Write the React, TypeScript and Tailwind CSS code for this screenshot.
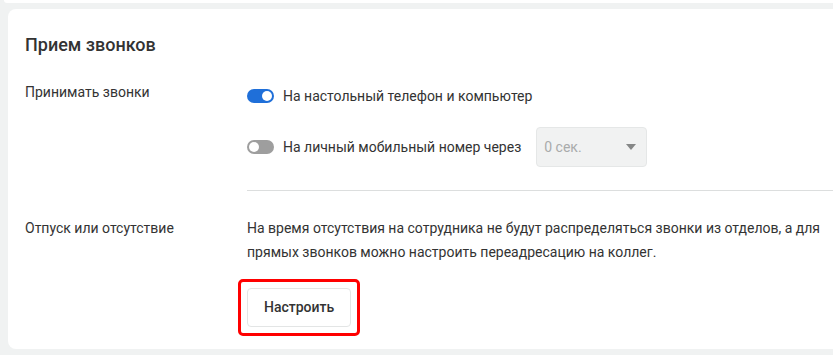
export default function App() {
  return (
    <div className="w-[833px] h-[355px] overflow-hidden bg-[#f0f2f2] font-['Roboto',sans-serif] text-[#333]">
      {/* bottom edge of the card above */}
      <div className="h-[3px] ml-[4px] bg-white rounded-bl-[6px]" />

      <div className="mt-[6px] ml-[8px] w-[900px] bg-white rounded-l-[8px] pl-[17px] pt-[24px] pb-[13px]">
        <h2 className="text-[18px] leading-[24px] font-medium">Прием звонков</h2>

        {/* Принимать звонки */}
        <div className="mt-[19px] flex">
          <div className="w-[222px] shrink-0 pt-[6px] text-[14px] leading-[20px]">Принимать звонки</div>
          <div className="flex-1 flex flex-col gap-[11px]">
            <div className="h-[40px] flex items-center gap-[9px]">
              <Toggle on />
              <span className="text-[14px] leading-[20px]">На настольный телефон и компьютер</span>
            </div>
            <div className="h-[40px] flex items-center">
              <Toggle on={false} />
              <span className="ml-[9px] text-[14px] leading-[20px]">На личный мобильный номер через</span>
              <div className="ml-[15px] w-[111px] h-[40px] flex items-center justify-between pl-[7px] pr-[10px] bg-[#f1f2f2] border border-[#e5e7e7] rounded-[4px]">
                <span className="text-[14px] text-[#a9abab]">0 сек.</span>
                <svg width="10" height="6" viewBox="0 0 10 6">
                  <path d="M0 0h10L5 6z" fill="#858787" />
                </svg>
              </div>
            </div>
          </div>
        </div>

        <div className="ml-[222px] mt-[23px] h-px bg-[#dcdede]" />

        {/* Отпуск или отсутствие */}
        <div className="mt-[25px] flex">
          <div className="w-[222px] shrink-0 text-[14px] leading-[24px]">Отпуск или отсутствие</div>
          <div className="flex-1">
            <p className="w-[585px] text-[14px] leading-[24px]">
              На время отсутствия на сотрудника не будут распределяться звонки из отделов, а для прямых звонков можно настроить переадресацию на коллег.
            </p>
            <div className="mt-[15px] -ml-[9px] w-fit border-[3px] border-[#ff0000] rounded-[5px] p-[6px]">
              <button className="h-[39px] px-[16px] bg-white border border-[#e3e5e5] rounded-[4px] text-[14px] font-medium text-[#333]">
                Настроить
              </button>
            </div>
          </div>
        </div>
      </div>
    </div>
  );
}

function Toggle({ on }: { on: boolean }) {
  return (
    <div
      className={
        on
          ? "w-[27px] h-[14px] rounded-full bg-[#1f6fd9] flex items-center justify-end px-[2px] shrink-0"
          : "w-[27px] h-[14px] rounded-full bg-[#9e9e9e] flex items-center justify-start px-[2px] shrink-0"
      }
    >
      <div className="w-[10px] h-[10px] rounded-full bg-white" />
    </div>
  );
}
